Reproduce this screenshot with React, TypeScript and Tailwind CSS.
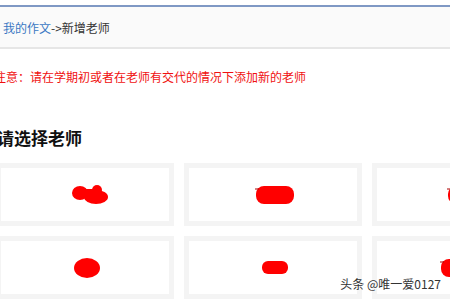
import React from "react";

const FONT = { fontFamily: '"Noto Sans CJK SC", "Liberation Sans", sans-serif' };

function Blob({ kind }: { kind: number }) {
  // red scribbles covering the teacher names
  if (kind === 0) {
    return (
      <svg width="38" height="22" viewBox="0 0 38 22">
        <ellipse cx="9" cy="9" rx="8" ry="7" fill="#ff0000" />
        <ellipse cx="25" cy="13" rx="12" ry="7" fill="#ff0000" />
        <circle cx="26" cy="6" r="5" fill="#ff0000" />
        <rect x="8" y="5" width="16" height="9" fill="#ff0000" />
      </svg>
    );
  }
  if (kind === 1) {
    return (
      <svg width="40" height="20" viewBox="0 0 40 20">
        <rect x="1" y="1" width="38" height="18" rx="8" fill="#ff0000" />
        <path d="M0 4 L4 4" stroke="#aa0000" strokeWidth="1" />
      </svg>
    );
  }
  if (kind === 2) {
    return (
      <svg width="30" height="22" viewBox="0 0 30 22">
        <ellipse cx="15" cy="11" rx="13" ry="10" fill="#ff0000" />
      </svg>
    );
  }
  return (
    <svg width="26" height="13" viewBox="0 0 26 13">
      <rect x="0" y="0" width="26" height="13" rx="6" fill="#ff0000" />
    </svg>
  );
}

function Card({ kind, offset = 0 }: { kind: number; offset?: number }) {
  return (
    <div className="flex h-[63px] w-[178px] shrink-0 items-center justify-center border-[5px] border-[#f4f4f4] bg-white">
      <div style={{ marginLeft: offset }}>
        <Blob kind={kind} />
      </div>
    </div>
  );
}

export default function App() {
  return (
    <div className="relative h-[300px] w-[450px] overflow-hidden bg-white" style={FONT}>
      <div className="mt-[5px] h-[2px] bg-[#7f98c4]" />
      <div className="flex h-[42px] items-center border-b-2 border-[#e6e6e6] bg-[#fafafa] pl-[3px] pt-[2px] text-[12px]">
        <span className="text-[#3b78c3]">我的作文</span>
        <span className="text-[#333]">-&gt;新增老师</span>
      </div>

      <p className="-ml-[6px] mt-[20px] whitespace-nowrap text-[12px] leading-[16px] text-[#f01010]">
        注意：请在学期初或者在老师有交代的情况下添加新的老师
      </p>

      <h2 className="-ml-[3px] mt-[41px] whitespace-nowrap text-[17px] font-bold leading-[24px] text-[#111]">
        请选择老师
      </h2>

      <div className="-ml-[4px] mt-[13px] flex flex-col gap-[10px]">
        <div className="flex gap-[10px]">
          <Card kind={0} offset={10} />
          <Card kind={1} offset={4} />
          <Card kind={1} offset={12} />
        </div>
        <div className="flex gap-[10px]">
          <Card kind={2} offset={4} />
          <Card kind={3} offset={4} />
          <Card kind={1} offset={-2} />
        </div>
      </div>

      <div className="absolute bottom-[7px] right-[9px] whitespace-nowrap text-[12px] text-[#333] [text-shadow:0_0_2px_#fff,0_0_2px_#fff]">
        头条 @唯一爱0127
      </div>
    </div>
  );
}
